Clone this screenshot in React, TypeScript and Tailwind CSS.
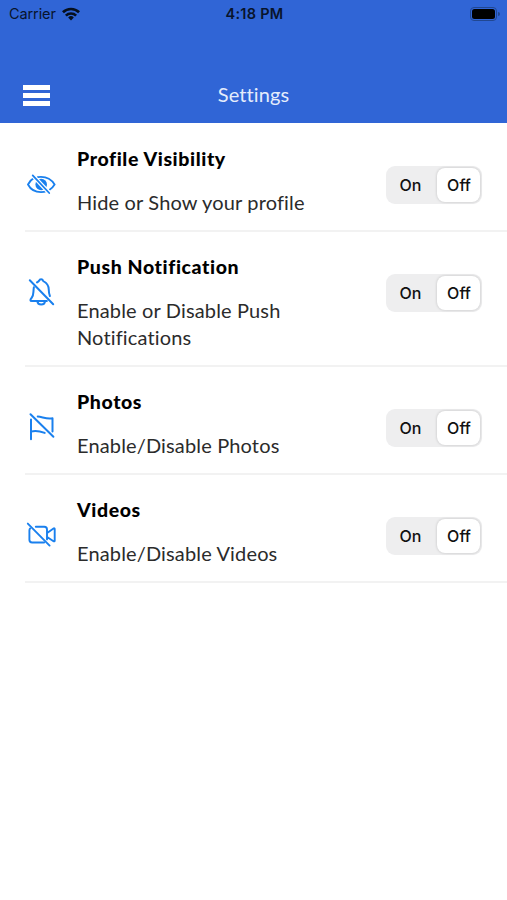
import type { ReactNode } from 'react'

function EyeOffIcon() {
  return (
    <svg width="30" height="30" viewBox="0 -1 30 30" fill="none" stroke="#1a80ee" strokeWidth="1.8" strokeLinecap="round">
      <path d="M7.8 8.100C5.200 9.500 3.200 12 2 14.500c2.300 4.500 7 7.600 13 7.600 2.200 0 4.200-.4 5.900-1.100M11.800 7.200c1-.2 2.100-.3 3.200-.3 6 0 10.800 3.100 13.600 7.600-1.200 2-2.800 3.700-4.700 5" />
      <circle cx="15.200" cy="14.500" r="5.800" fill="#1a80ee" stroke="none" />
      <path d="M6.700 5.400l16.500 17.600" stroke="white" strokeWidth="4.200" strokeLinecap="butt" />
      <path d="M6.700 5.400l16.500 17.600" />
    </svg>
  )
}

function BellOffIcon() {
  return (
    <svg width="30" height="30" viewBox="0 0 30 30" fill="none" stroke="#1a80ee" strokeWidth="2" strokeLinecap="round" strokeLinejoin="round">
      <path d="M3.800 3.200l23.400 24" />
      <path d="M7.900 10.200c-.9 5.200.1 8.100-2.200 10.600-1.700 1.900-1.800 3.200.2 3.200h15" />
      <path d="M11 5.400c.9-.7 1.600-.9 2-1.600.8-2.200 3.400-2.200 4.200 0 .5 1.200 5.200 1.700 5.500 8.200.1 3 .3 5.200 1.200 7" />
      <path d="M11.400 24.300c.2 4.300 7.400 4.300 7.600 0" />
    </svg>
  )
}

function FlagOffIcon() {
  return (
    <svg width="30" height="30" viewBox="0 0 30 30" fill="none" stroke="#1a80ee" strokeWidth="2" strokeLinecap="round" strokeLinejoin="round">
      <path d="M4.500 2.200L27.400 24.800" />
      <path d="M5 7.500v19.700M5 19.600c4.700-1.300 8.500-.6 13.700 1.300" />
      <path d="M11.700 4.500c4.800.4 9.300 3 14.800 1.700v13.400" />
    </svg>
  )
}

function VideoOffIcon() {
  return (
    <svg width="30" height="30" viewBox="0 0 30 30" fill="none" stroke="#1a80ee" strokeWidth="1.9" strokeLinecap="round" strokeLinejoin="round">
      <path d="M1.800 3.600L23.600 25.600" />
      <path d="M4.100 8.500c-.5.500-.7 1.100-.7 1.900v9.400c0 1.700 1 2.700 2.700 2.700h12" />
      <path d="M9.800 6.700h8.500c1.700 0 2.700 1 2.700 2.700v10M21.500 12.700l6-4.200c.6-.4 1.200-.2 1.200.5v11.700c0 .7-.6.900-1.200.5l-6-4" />
    </svg>
  )
}

function StatusBar() {
  return (
    <div className="flex h-7 items-center justify-between pl-[9px] pr-[7px] font-['Inter','Roboto',sans-serif] text-[#08142c]">
      <div className="flex w-[120px] items-center gap-[6px]">
        <span className="text-[14.5px] tracking-[-0.1px]">Carrier</span>
        <svg width="18" height="14" viewBox="0 0 19 14" fill="none" stroke="#06101f" strokeWidth="2.8">
          <path d="M1 5.200a12.200 12.200 0 0 1 17 0" />
          <path d="M4.100 8.700a7.700 7.700 0 0 1 10.800 0" />
          <path d="M9.500 13.800l-3-3.200a4.300 4.300 0 0 1 6 0z" fill="#06101f" stroke="none" />
        </svg>
      </div>
      <span className="text-[14.5px] font-semibold tracking-[0.25px]">4:18 PM</span>
      <div className="flex w-[120px] items-center justify-end gap-px">
        <div className="h-[14px] w-[27px] rounded-[4px] border border-[#214791] p-px">
          <div className="h-full w-full rounded-[2.5px] bg-black" />
        </div>
        <div className="h-1 w-[2px] rounded-r-full bg-[#214791]" />
      </div>
    </div>
  )
}

function Header() {
  return (
    <header className="h-[123px] bg-[#3065d6]">
      <StatusBar />
      <div className="mt-[39px] grid h-14 grid-cols-[1fr_auto_1fr] items-center px-[23px]">
        <button className="flex w-[27px] flex-col gap-[3px]" aria-label="Menu">
          <span className="h-[5px] w-full bg-white" />
          <span className="h-[5px] w-full bg-white" />
          <span className="h-[5px] w-full bg-white" />
        </button>
        <h1 className="pb-[3px] font-['Lato',sans-serif] text-[20px] tracking-[0.1px] text-[#e4ecfc]">Settings</h1>
      </div>
    </header>
  )
}

function Toggle() {
  return (
    <div className="mt-[42px] flex h-[38px] w-24 shrink-0 rounded-[9px] bg-[#eeeeef] p-[2px] font-['Inter','Roboto',sans-serif] text-[16px] font-medium text-[#111]">
      <button className="w-[49px] pr-[4px] pb-px">On</button>
      <button className="w-[43px] rounded-[8px] bg-white pb-px pl-px shadow-[0_0_3px_rgba(0,0,0,0.2)]">Off</button>
    </div>
  )
}

interface Setting {
  title: string
  description: string
  icon: ReactNode
}

const settings: Setting[] = [
  { title: 'Profile Visibility', description: 'Hide or Show your profile', icon: <EyeOffIcon /> },
  { title: 'Push Notification', description: 'Enable or Disable Push Notifications', icon: <BellOffIcon /> },
  { title: 'Photos', description: 'Enable/Disable Photos', icon: <FlagOffIcon /> },
  { title: 'Videos', description: 'Enable/Disable Videos', icon: <VideoOffIcon /> },
]

function SettingRow({ title, description, icon }: Setting) {
  return (
    <li className="flex border-b-2 border-[#f2f2f2] pr-[25px]">
      <div className="mt-[45px] w-[52px] shrink-0 pl-px">{icon}</div>
      <div className="flex-1 pt-[21px] pb-[14px] font-['Lato',sans-serif]">
        <h2 className="text-[19.5px] font-black leading-[27px] tracking-[0.6px] text-black">{title}</h2>
        <p className="mt-[17px] w-[240px] text-[20px] leading-[27px] tracking-[0.15px] text-[#2b2b2b]">{description}</p>
      </div>
      <Toggle />
    </li>
  )
}

export default function App() {
  return (
    <div className="min-h-[900px] bg-white">
      <Header />
      <ul className="pl-[25px] pt-px">
        {settings.map(s => (
          <SettingRow key={s.title} {...s} />
        ))}
      </ul>
    </div>
  )
}
